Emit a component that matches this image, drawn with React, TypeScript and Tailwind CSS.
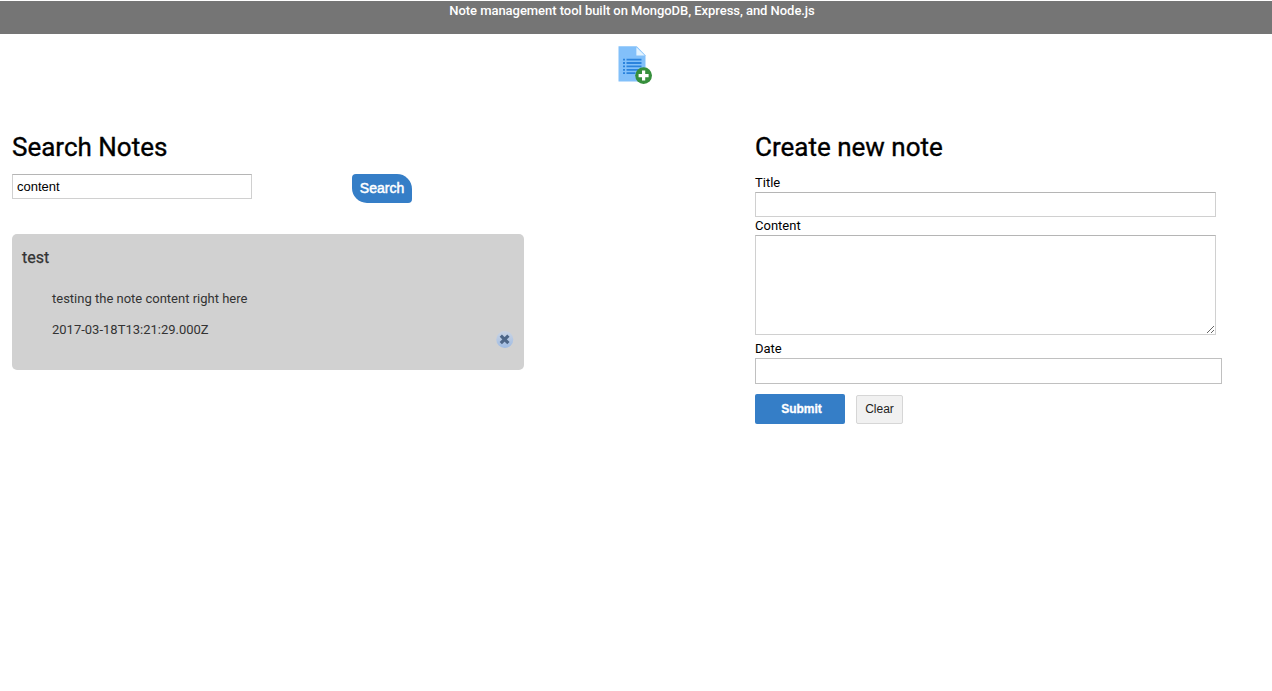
import React from "react";

function NoteIcon() {
  return (
    <svg width="36" height="40" viewBox="0 0 36 40" aria-hidden="true">
      <path d="M0.5 1.3h18.2l8.8 9v26.2h-27z" fill="#82c0fa" />
      <path d="M18.4 2.3v8.3h8.4z" fill="#e3f3ff" />
      <g fill="#2b83dd">
        <path d="M8.5 13.7h15v1.8h-15zM8.5 17.1h15v1.8h-15zM8.5 20.5h15v1.8h-15zM8.5 23.9h12v1.8h-12zM8.5 27.3h9v1.8h-9z" />
        <path d="M5 13.7h2v1.8H5zM5 17.1h2v1.8H5zM5 20.5h2v1.8H5zM5 23.9h2v1.8H5zM5 27.3h2v1.8H5z" />
      </g>
      <circle cx="25.6" cy="30.6" r="8.4" fill="#368f3c" />
      <path d="M24 25.6h3.2V29h3.4v3.2h-3.4v3.4H24v-3.4h-3.4V29H24z" fill="#fff" />
    </svg>
  );
}

function DeleteIcon() {
  return (
    <svg width="18" height="18" viewBox="0 0 18 18" aria-hidden="true">
      <defs>
        <linearGradient id="disc" x1="0" y1="0" x2="0" y2="1">
          <stop offset="0" stopColor="#cbd5e4" />
          <stop offset="1" stopColor="#9fbbe3" />
        </linearGradient>
      </defs>
      <circle cx="8.8" cy="9.4" r="8.5" fill="url(#disc)" />
      <path d="M4.8 5.6l7.6 7.6M12.4 5.6l-7.6 7.6" stroke="#4d6688" strokeWidth="3.2" />
    </svg>
  );
}

const field =
  "block rounded-none border border-[#d0d0d0] border-t-[#b5b5b5] bg-white outline-none";

export default function App() {
  return (
    <div className="h-[691px] overflow-hidden bg-white pt-px font-['Roboto',sans-serif] text-[13px] text-black">
      <header className="h-[33px] bg-[#757575] pr-2 text-center font-medium leading-[19px] tracking-[-0.045px] text-white">
        Note management tool built on MongoDB, Express, and Node.js
      </header>
      <div className="flex h-[91px] pl-[618px] pt-[11px]">
        <NoteIcon />
      </div>
      <main className="flex pl-3">
        <section className="w-[743px]">
          <h2 className="pt-[6px] text-[26px] leading-[32px] [-webkit-text-stroke:0.35px_black]">Search Notes</h2>
          <form className="mt-[11px] flex h-[60px] items-start" onSubmit={(e) => e.preventDefault()}>
            <input
              className={`${field} h-[25px] w-[240px] px-1 font-['Liberation_Sans',sans-serif] text-[13px]`}
              defaultValue="content"
              aria-label="Search notes"
            />
            <button className="ml-[100px] h-[29px] w-[60px] rounded-tl-[4px] rounded-tr-[15px] rounded-br-[4px] rounded-bl-[15px] bg-[#357ec7] font-['Liberation_Sans',sans-serif] text-[14px] text-white [-webkit-text-stroke:0.5px_white]">
              Search
            </button>
          </form>
          <article className="flex h-[136px] w-[512px] rounded-[5px] bg-[#d1d1d1] text-[#333]">
            <div className="flex-1 pl-[10px] pt-[14px]">
              <h3 className="text-[16px] leading-[20px] [-webkit-text-stroke:0.25px_#333]">test</h3>
              <p className="ml-[30px] mt-[21px] leading-[20px]">testing the note content right here</p>
              <p className="ml-[30px] mt-[11px] leading-[20px]">2017-03-18T13:21:29.000Z</p>
            </div>
            <button className="mr-[10px] mt-[96px] h-[18px]" aria-label="Delete note">
              <DeleteIcon />
            </button>
          </article>
        </section>
        <section>
          <h2 className="pt-[6px] text-[26px] leading-[32px] [-webkit-text-stroke:0.35px_black]">Create new note</h2>
          <form onSubmit={(e) => e.preventDefault()}>
            <label className="mt-[11px] block h-[18px] text-[13px] leading-[18px]" htmlFor="title">Title</label>
            <input id="title" className={`${field} h-[25px] w-[461px] px-1`} />
            <label className="block h-[18px] leading-[18px]" htmlFor="content">Content</label>
            <textarea id="content" className={`${field} h-[100px] w-[461px] resize p-1`} />
            <label className="mt-[5px] block h-[18px] leading-[18px]" htmlFor="date">Date</label>
            <input id="date" className="block h-[26px] w-[467px] border border-[#c0c0c0] bg-white px-1 outline-none" />
            <div className="mt-[10px] flex">
              <button className="h-[30px] w-[90px] rounded-[2px] bg-[#357ec7] pl-[3px] font-['Liberation_Sans',sans-serif] text-[12px] font-bold text-white [-webkit-text-stroke:0.3px_white]">
                Submit
              </button>
              <button type="reset" className="ml-[11px] mt-px h-[29px] w-[47px] rounded-[2px] border border-[#d6d6d6] bg-[#f1f1f1] pb-[2px] font-['Liberation_Sans',sans-serif] text-[12px] text-[#222]">
                Clear
              </button>
            </div>
          </form>
        </section>
      </main>
    </div>
  );
}
